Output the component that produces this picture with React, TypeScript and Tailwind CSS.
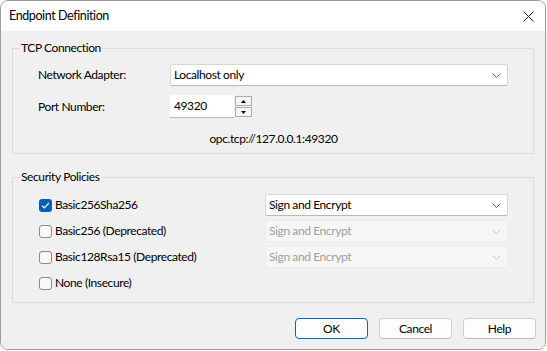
import React, { useState } from "react"

const font = { fontFamily: 'Lato, "Noto Sans", sans-serif' }

const Chevron = ({ disabled }: { disabled?: boolean }) => (
  <svg width="9" height="5" viewBox="0 0 9 5" className="shrink-0">
    <path d="M0.5 0.5 L4.5 4.5 L8.5 0.5" fill="none" stroke={disabled ? "#c8c8c8" : "#606060"} strokeWidth="1" />
  </svg>
)

const Combo = ({ value, disabled, className }: { value: string; disabled?: boolean; className: string }) => (
  <div
    className={
      "h-[22px] flex items-center justify-between pl-[3px] pr-[6px] rounded-[2px] border " +
      (disabled
        ? "bg-[#f6f6f6] border-[#ececec] text-[#a0a0a0] "
        : "bg-white border-[#d6d6d6] border-b-[#b8b8b8] text-black ") +
      className
    }
  >
    <span>{value}</span>
    <Chevron disabled={disabled} />
  </div>
)

const Check = ({ checked, onClick }: { checked: boolean; onClick: () => void }) => (
  <button
    type="button"
    onClick={onClick}
    className={
      "w-[13px] h-[13px] rounded-[3px] flex items-center justify-center shrink-0 " +
      (checked ? "bg-[#005fb8]" : "bg-[#f9f9f9] border border-[#8a8a8a]")
    }
  >
    {checked && (
      <svg width="9" height="7" viewBox="0 0 9 7">
        <path d="M1 3.6 L3.3 5.8 L8 1" fill="none" stroke="white" strokeWidth="1.2" />
      </svg>
    )}
  </button>
)

const SpinArrow = ({ up }: { up?: boolean }) => (
  <div className="h-[10px] w-full bg-[#f4f4f4] border border-[#adadad] flex items-center justify-center">
    <svg width="5" height="3" viewBox="0 0 5 3">
      <path d={up ? "M0 3 L2.5 0 L5 3 Z" : "M0 0 L2.5 3 L5 0 Z"} fill="#000" />
    </svg>
  </div>
)

const Button = ({ label, primary }: { label: string; primary?: boolean }) => (
  <button
    type="button"
    className={
      "w-[73px] h-[21px] rounded-[4px] bg-[#fdfdfd] text-black " +
      (primary ? "border border-[#0067c0]" : "border border-[#d0d0d0] border-b-[#bdbdbd]")
    }
  >
    {label}
  </button>
)

export default function App() {
  const [policies, setPolicies] = useState([true, false, false, false])

  const toggle = (i: number) => setPolicies(policies.map((p, j) => (j === i ? !p : p)))

  const rows = [
    { label: "Basic256Sha256", combo: true },
    { label: "Basic256 (Deprecated)", combo: true },
    { label: "Basic128Rsa15 (Deprecated)", combo: true },
    { label: "None (Insecure)", combo: false },
  ]

  return (
    <div className="w-[547px] h-[351px] bg-white text-[12px] tracking-[-0.4px] text-black" style={font}>
      <div className="w-[546px] h-[350px] flex flex-col rounded-[8px] border border-[#9a9a9a] overflow-hidden">
        {/* title bar */}
        <div className="h-[30px] bg-white flex items-center justify-between pl-[8px] pr-[11px] shrink-0">
          <span className="text-[12.5px]">Endpoint Definition</span>
          <svg width="11" height="11" viewBox="0 0 11 11">
            <path d="M0.5 0.5 L10.5 10.5 M10.5 0.5 L0.5 10.5" stroke="#1a1a1a" strokeWidth="1" />
          </svg>
        </div>

        <div className="flex-1 bg-[#f0f0f0] flex flex-col px-[11px] pt-[9px]">
          <fieldset className="border border-[#dcdcdc] h-[114px] px-0">
            <legend className="ml-[7px] px-[1px] leading-[16px]">TCP Connection</legend>
            <div className="flex items-center mt-[8px]">
              <span className="w-[157px] pl-[25px]">Network Adapter:</span>
              <Combo value="Localhost only" className="w-[338px]" />
            </div>
            <div className="flex items-center mt-[9px]">
              <span className="w-[157px] pl-[25px]">Port Number:</span>
              <div className="w-[64px] h-[23px] bg-white border-b border-[#b8b8b8] flex items-center pl-[4px]">
                49320
              </div>
              <div className="w-[17px] flex flex-col ml-[1px]">
                <SpinArrow up />
                <div className="h-px" />
                <SpinArrow />
              </div>
            </div>
            <div className="text-center mt-[12px] pl-[1px]">opc.tcp://127.0.0.1:49320</div>
          </fieldset>

          <fieldset className="border border-[#dcdcdc] h-[134px] px-0 mt-[15px]">
            <legend className="ml-[7px] px-[1px] leading-[16px]">Security Policies</legend>
            <div className="flex flex-col mt-[7px]">
              {rows.map((r, i) => (
                <div key={r.label} className="h-[26px] flex items-center pl-[26px]">
                  <Check checked={policies[i]} onClick={() => toggle(i)} />
                  <span className="ml-[3px] w-[210px]">{r.label}</span>
                  {r.combo && (
                    <Combo value="Sign and Encrypt" disabled={i > 0} className="w-[243px]" />
                  )}
                </div>
              ))}
            </div>
          </fieldset>

          <div className="flex justify-end gap-[11px] mt-[15px] -mr-[2px]">
            <Button label="OK" primary />
            <Button label="Cancel" />
            <Button label="Help" />
          </div>
        </div>
      </div>
    </div>
  )
}
